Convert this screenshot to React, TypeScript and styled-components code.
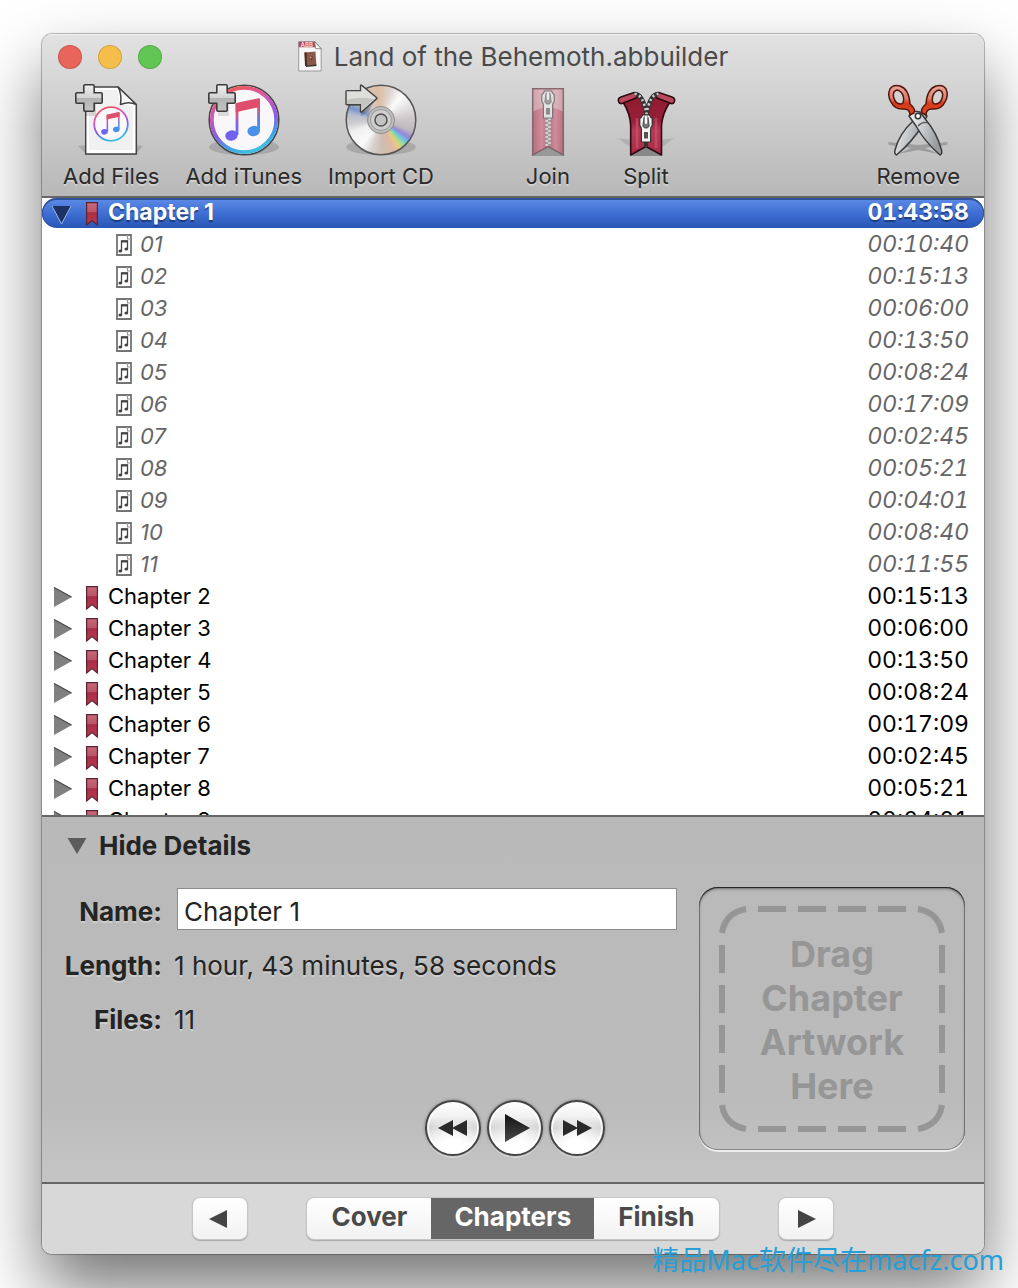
import React, { useState } from "react";
import styled, { createGlobalStyle, css } from "styled-components";

const GlobalStyle = createGlobalStyle`
  * { box-sizing: border-box; }
  html, body { margin: 0; background: #fff; }
  body { font-family: Inter, "Liberation Sans", sans-serif; color: #242424; }
  button, input { font: inherit; color: inherit; }
  button { margin: 0; padding: 0; border: 0; background: none; }
  ul { list-style: none; margin: 0; padding: 0; }
  svg { display: block; flex: none; overflow: visible; }
`;

const Page = styled.div`
  position: relative;
  height: 100vh;
  min-height: 900px;
  padding: 34px 34px 34px 42px;
  display: flex;
  overflow: hidden;
`;

const Window = styled.main`
  flex: 1;
  min-width: 0;
  display: flex;
  flex-direction: column;
  border-radius: 10px;
  overflow: hidden;
  background: #fff;
  box-shadow: 0 0 0 1px rgba(0, 0, 0, 0.2), 0 0 2px rgba(0, 0, 0, 0.25), 0 36px 68px rgba(0, 0, 0, 0.54);
`;

const Header = styled.header`
  flex: none;
  background: linear-gradient(#e2e2e2, #b8b8b8);
  border-bottom: 2px solid #666;
  box-shadow: inset 0 1px 0 #f2f2f2;
`;

const TitleBar = styled.div`
  display: grid;
  grid-template-columns: 1fr auto 1fr;
  align-items: center;
  height: 46px;
  padding: 0 16px;
`;

const Lights = styled.div`
  display: flex;
  gap: 16px;
`;

const Light = styled.button<{ $color: string }>`
  width: 24px;
  height: 24px;
  border-radius: 50%;
  background: ${(p) => p.$color};
  box-shadow: inset 0 0 0 1px rgba(0, 0, 0, 0.14);
`;

const Title = styled.h1`
  display: flex;
  align-items: center;
  gap: 12px;
  margin: 0;
  font-size: 26px;
  font-weight: 400;
  line-height: 32px;
  color: #4a4a4a;
  white-space: nowrap;
`;

const Toolbar = styled.div`
  display: flex;
  gap: 78px;
  padding: 4px 24px 6px 21px;
`;

const ToolGroup = styled.div<{ $end?: boolean }>`
  display: flex;
  gap: 26px;
  margin-left: ${(p) => (p.$end ? "auto" : "0")};
`;

const Tool = styled.button`
  display: flex;
  flex-direction: column;
  align-items: center;
  gap: 6px;
  font-size: 22px;
  line-height: 28px;
  color: #2a2a2a;
  text-shadow: 0 2px 0 rgba(255, 255, 255, 0.35);
  white-space: nowrap;
`;

const List = styled.ul`
  flex: 1;
  min-height: 0;
  overflow: hidden;
`;

const Row = styled.li<{ $kind: "selected" | "chapter" | "track" }>`
  display: flex;
  align-items: center;
  height: 30px;
  margin-bottom: 2px;
  padding: 0 15px 0 8px;
  font-size: 22px;
  line-height: 28px;
  color: #000;
  ${(p) =>
    p.$kind === "selected" &&
    css`
      border-radius: 15px;
      background: linear-gradient(#5f8ce8, #3f6fd4 50%, #2856b6);
      box-shadow: inset 0 2px 0 #30549c, inset 1px 0 0 #30549c, inset -1px 0 0 #30549c;
      color: #fff;
      font-size: 23px;
      font-weight: 700;
      text-shadow: 0 2px 1px rgba(0, 0, 0, 0.4);
    `}
  ${(p) =>
    p.$kind === "track" &&
    css`
      padding-left: 74px;
      color: #666;
      font-style: italic;
    `}
`;

const Disclosure = styled.button`
  width: 24px;
  margin-right: 12px;
  display: flex;
  justify-content: center;
`;

const RowName = styled.span<{ $track?: boolean }>`
  flex: 1;
  height: 30px;
  margin-left: ${(p) => (p.$track ? 8 : 10)}px;
`;

const Time = styled.span`
  height: 30px;
  font-size: 23px;
  font-variant-numeric: tabular-nums;
`;

const Details = styled.section`
  flex: none;
  padding: 0 19px 26px 22px;
  border-top: 2px solid #666;
  border-bottom: 2px solid #666;
  background: linear-gradient(#b9b9b9, #bbb 78%, #c5c5c5);
  font-size: 26px;
  line-height: 32px;
  text-shadow: 0 2px 0 rgba(255, 255, 255, 0.3);
`;

const Toggle = styled.button`
  display: flex;
  align-items: center;
  gap: 12px;
  margin: 13px 0 23px 3px;
  font-weight: 700;
`;

const Form = styled.div`
  display: grid;
  grid-template-columns: 98px 1fr 266px;
  grid-template-rows: 54px 54px 54px auto;
  align-items: center;
`;

const Label = styled.label`
  grid-column: 1;
  justify-self: end;
  font-weight: 700;
`;

const Value = styled.output`
  grid-column: 2;
  margin-left: 12px;
`;

const NameInput = styled.input`
  grid-column: 2;
  align-self: start;
  min-width: 0;
  height: 42px;
  margin: 3px 22px 0 15px;
  padding: 4px 6px 0;
  border: 1px solid #8c8c8c;
  border-radius: 0;
  background: #fff;
  outline: none;
`;

const Artwork = styled.div`
  grid-column: 3;
  grid-row: 1 / 5;
  align-self: start;
  height: 263px;
  margin-top: 2px;
  display: grid;
  place-items: center;
  border-radius: 19px;
  box-shadow: inset 0 1px 1px #222, inset 0 2px 3px rgba(0, 0, 0, 0.35), inset 0 0 0 1px #8a8a8a, 0 2px 0 #eee;

  & > * {
    grid-area: 1 / 1;
  }
`;

const ArtworkText = styled.p`
  width: 160px;
  margin: 2px 0 0;
  text-align: center;
  font-size: 36px;
  font-weight: 700;
  line-height: 44px;
  color: #969696;
  text-shadow: none;
`;

const Player = styled.div`
  grid-column: 1 / 4;
  grid-row: 4;
  justify-self: center;
  display: flex;
  gap: 6px;
  margin-top: 53px;
`;

const RoundButton = styled.button`
  width: 56px;
  height: 56px;
  display: grid;
  place-items: center;
  border: 2px solid #454545;
  border-radius: 50%;
  background: radial-gradient(circle at 50% 95%, #fff 20%, rgba(255, 255, 255, 0) 62%),
    linear-gradient(#fff, #f2f2f2 28%, #d2d2d2 50%, #efefef 80%, #fff);
  box-shadow: inset 0 0 0 2px rgba(255, 255, 255, 0.8), 0 0 3px rgba(0, 0, 0, 0.4), 0 2px 1px rgba(255, 255, 255, 0.6);
`;

const Footer = styled.footer`
  flex: none;
  display: flex;
  justify-content: center;
  gap: 60px;
  height: 70px;
  padding-top: 14px;
  background: #d8d8d8;
`;

const buttonFace = css`
  height: 41px;
  border-radius: 7px;
  background: linear-gradient(#fff, #f2f2f2);
  box-shadow: 0 0 0 1px #c6c6c6, 0 1px 1px 1px #aaa;
`;

const StepButton = styled.button`
  ${buttonFace}
  width: 54px;
  display: grid;
  place-items: center;
`;

const Segments = styled.div`
  ${buttonFace}
  display: flex;
  overflow: hidden;
`;

const Segment = styled.button<{ $on: boolean }>`
  padding: 0 ${(p) => (p.$on ? 23 : 24)}px 3px;
  font-size: 26px;
  font-weight: 700;
  line-height: 36px;
  color: ${(p) => (p.$on ? "#fff" : "#4a4a4a")};
  background: ${(p) => (p.$on ? "#666" : "transparent")};
`;

const Watermark = styled.p`
  position: absolute;
  right: 14px;
  bottom: 8px;
  margin: 0;
  font-family: "Noto Sans", "Noto Sans CJK SC", sans-serif;
  font-size: 27px;
  line-height: 40px;
  color: #269fd6;
  white-space: nowrap;
`;

/* ---------- icons ---------- */

const Defs = () => (
  <svg width="0" height="0" style={{ position: "absolute" }} aria-hidden="true">
    <defs>
      <linearGradient id="plusFill" x1="0" y1="0" x2="0" y2="1">
        <stop offset="0" stopColor="#eee" />
        <stop offset=".48" stopColor="#d4d4d4" />
        <stop offset=".5" stopColor="#b2b2b2" />
        <stop offset="1" stopColor="#c4c4c4" />
      </linearGradient>
      <linearGradient id="noteFill" x1="0" y1="0" x2="0" y2="1">
        <stop offset="0" stopColor="#e5486a" />
        <stop offset=".35" stopColor="#d8547f" />
        <stop offset=".6" stopColor="#8a60e8" />
        <stop offset="1" stopColor="#5b6cf2" />
      </linearGradient>
      <linearGradient id="noteRight" x1="0" y1="0" x2="0" y2="1">
        <stop offset="0" stopColor="#e5486a" />
        <stop offset=".3" stopColor="#d4557f" />
        <stop offset=".65" stopColor="#5583e8" />
        <stop offset="1" stopColor="#3f9be6" />
      </linearGradient>
      <linearGradient id="ring" x1=".25" y1="0" x2=".6" y2="1">
        <stop offset="0" stopColor="#ee5a50" />
        <stop offset=".3" stopColor="#d558b4" />
        <stop offset=".62" stopColor="#8b5be6" />
        <stop offset=".85" stopColor="#3fa5e8" />
        <stop offset="1" stopColor="#41bfe0" />
      </linearGradient>
      <linearGradient id="flag" x1="0" y1="0" x2="0" y2="1">
        <stop offset="0" stopColor="#c66c7c" />
        <stop offset=".4" stopColor="#bd5468" />
        <stop offset=".45" stopColor="#aa2e45" />
        <stop offset="1" stopColor="#bb3a50" />
      </linearGradient>
      <linearGradient id="cloth" x1="0" x2="1" y1="0" y2="0">
        <stop offset="0" stopColor="#a32a44" />
        <stop offset=".3" stopColor="#d85a74" />
        <stop offset=".5" stopColor="#9c2a42" />
        <stop offset=".75" stopColor="#d85a74" />
        <stop offset="1" stopColor="#a32a44" />
      </linearGradient>
      <linearGradient id="splitCloth" x1="0" x2="0" y1="0" y2="1">
        <stop offset="0" stopColor="#8c1a2e" />
        <stop offset=".45" stopColor="#98203a" />
        <stop offset=".6" stopColor="#b83a54" />
        <stop offset="1" stopColor="#a82c46" />
      </linearGradient>
      <linearGradient id="handle" x1="0" y1="0" x2="0" y2="1">
        <stop offset="0" stopColor="#e8a79b" />
        <stop offset=".45" stopColor="#dc7d6c" />
        <stop offset=".6" stopColor="#d5391b" />
        <stop offset="1" stopColor="#e04a26" />
      </linearGradient>
      <linearGradient id="blade" x1="0" x2="1" y1="0" y2=".4">
        <stop offset="0" stopColor="#f4f4f4" />
        <stop offset=".5" stopColor="#c9ccce" />
        <stop offset="1" stopColor="#979b9e" />
      </linearGradient>
      <linearGradient id="play" x1="0" y1="0" x2="0" y2="1">
        <stop offset="0" stopColor="#111" />
        <stop offset="1" stopColor="#4a4a4a" />
      </linearGradient>
    </defs>
  </svg>
);

const Plus = () => (
  <g>
    <path d="M10 12h11v20H10z" fill="#000" opacity=".12" />
    <path
      d="M10 .8h8q1.2 0 1.2 1.200V8.800h6.800q1.200 0 1.200 1.200v8q0 1.200-1.200 1.200h-6.800v6.800q0 1.200-1.200 1.200h-8q-1.200 0-1.200-1.200v-6.800H2q-1.200 0-1.200-1.200v-8q0-1.200 1.200-1.200h6.800V2q0-1.200 1.200-1.200z"
      fill="url(#plusFill)"
      stroke="#3c3c3c"
      strokeWidth="1.600"
    />
  </g>
);

const Note = () => (
  <g>
    <ellipse cx="23.500" cy="51.500" rx="6.300" ry="5.200" fill="#7262ee" transform="rotate(-12 23.500 51.500)" />
    <ellipse cx="45.700" cy="47" rx="6.300" ry="5.200" fill="#4a90e8" transform="rotate(-12 45.700 47)" />
    <path d="M27.600 19.500 L30.400 19 V51 H27.600z" fill="url(#noteFill)" />
    <path d="M49.200 15 H52 V47 H49.200z" fill="url(#noteRight)" />
    <path d="M27.600 20.500q0-1.500 1.500-1.800l21-4.400q1.900-.4 1.900 1.400v7.300L27.600 28.200z" fill="#de4e6d" />
  </g>
);

const AddFilesIcon = () => (
  <svg width="72" height="72" viewBox="0 0 72 72" aria-hidden="true">
    <path d="M3 62Q18 60 36 60t32 2L60 71H12z" fill="#000" opacity=".14" />
    <path d="M10.700 3H43L61.300 20.500V70H10.700z" fill="#fff" stroke="#444" strokeWidth="1.500" />
    <path d="M14 6H42l3 14 13 2V66H14z" fill="#f1f1f1" />
    <path d="M43 3q4 7 2.500 17.500Q54 17 61.300 20.500z" fill="#f6f6f6" stroke="#444" strokeWidth="1.500" strokeLinejoin="round" />
    <circle cx="36" cy="40" r="16.800" fill="#fbf8fb" stroke="url(#ring)" strokeWidth="1.800" />
    <g transform="translate(17 20.500) scale(.53)">
      <Note />
    </g>
    <Plus />
  </svg>
);

const AddITunesIcon = () => (
  <svg width="72" height="72" viewBox="0 0 72 72" aria-hidden="true">
    <ellipse cx="36" cy="63" rx="35" ry="8" fill="#000" opacity=".14" />
    <circle cx="36" cy="36" r="34.800" fill="#fff" stroke="#444" strokeWidth="1.600" />
    <circle cx="36" cy="36" r="32.200" fill="#faf7fb" stroke="url(#ring)" strokeWidth="3.800" />
    <Note />
    <Plus />
  </svg>
);

type Stop = [number, number, number, number];
const discStops: Stop[] = [
  [0, 200, 196, 198],
  [18, 188, 184, 188],
  [30, 150, 130, 215],
  [38, 110, 190, 235],
  [46, 150, 225, 150],
  [54, 235, 205, 120],
  [64, 225, 185, 165],
  [85, 205, 190, 180],
  [105, 216, 210, 206],
  [125, 250, 250, 250],
  [155, 240, 240, 240],
  [172, 205, 205, 208],
  [188, 185, 190, 205],
  [200, 120, 150, 205],
  [212, 170, 175, 190],
  [235, 215, 205, 200],
  [262, 222, 188, 160],
  [285, 222, 212, 206],
  [308, 252, 252, 252],
  [335, 225, 222, 224],
  [360, 200, 196, 198],
];

const discColor = (deg: number) => {
  const i = discStops.findIndex((s) => s[0] > deg);
  const a = discStops[i - 1];
  const b = discStops[i];
  const t = (deg - a[0]) / (b[0] - a[0]);
  const mix = (k: number) => Math.round(a[k] + (b[k] - a[k]) * t);
  return `rgb(${mix(1)},${mix(2)},${mix(3)})`;
};

const sectorPath = (deg: number, step: number) => {
  const at = (d: number) => {
    const r = (d * Math.PI) / 180;
    return `${(36 + 35 * Math.cos(r)).toFixed(2)} ${(36 + 35 * Math.sin(r)).toFixed(2)}`;
  };
  return `M36 36L${at(deg)}L${at(deg + step + 1.5)}z`;
};

const ImportCdIcon = () => (
  <svg width="72" height="72" viewBox="0 0 72 72" aria-hidden="true">
    <ellipse cx="36" cy="63" rx="35" ry="8" fill="#000" opacity=".14" />
    {Array.from({ length: 90 }, (_, i) => (
      <path key={i} d={sectorPath(i * 4, 4)} fill={discColor(i * 4)} />
    ))}
    <circle cx="36" cy="36" r="34.800" fill="none" stroke="#555" strokeWidth="1.500" />
    <circle cx="36" cy="36" r="13.500" fill="#bdbdbd" stroke="#8d8d8d" strokeWidth="1" />
    <circle cx="36" cy="36" r="10.500" fill="#cfcfcf" stroke="#9a9a9a" strokeWidth="1" />
    <circle cx="36" cy="36" r="6" fill="#c4c4c4" stroke="#555" strokeWidth="1.600" />
    <path d="M2 22h14v10l8-5 5-9z" fill="#000" opacity=".18" />
    <path
      d="M1 7.600q0-1 1-1H15.500V2q0-1.500 1.300-.6L31.500 13.400q.8.800 0 1.500L16.800 27.800q-1.300.7-1.300-.8V20.800H2q-1 0-1-1z"
      fill="#dedfda"
      stroke="#444"
      strokeWidth="1.400"
    />
    <path d="M2 16Q14 12 29 15L16.400 26.300V20H2z" fill="#c4c5c0" />
  </svg>
);

const Pull = () => (
  <g>
    <path
      d="M32.500 0h7q1.300 3 2.700 3.500v7q-1.600 1.500-1.600 4v12.500h-9.200V14.500q0-2.500-1.600-4v-7Q31.500 3 32.500 0z"
      fill="#f2f2f2"
      stroke="#333"
      strokeWidth="1.200"
    />
    <path d="M34 2h4l1.200 9-1.700 2h-3l-1.700-2z" fill="#777" stroke="#333" strokeWidth=".8" />
    <rect x="34.800" y="1" width="2.400" height="8" rx="1.200" fill="#fff" />
    <rect x="34" y="17" width="4" height="6.500" fill="#555" />
  </g>
);

const JoinIcon = () => (
  <svg width="72" height="72" viewBox="0 0 72 72" aria-hidden="true" opacity=".55">
    <path d="M20 72L36 62l16 10z" fill="#777" />
    <path d="M20.700 4.700h30.600v66.300L36 62.500 20.700 71z" fill="url(#cloth)" stroke="#4a1420" strokeWidth="1.500" />
    <path d="M21.500 5.500h29v22Q36 19 21.500 27.500z" fill="#fff" opacity=".4" />
    <path d="M36 8V62" stroke="#777" strokeWidth="5" />
    <path d="M34.800 8V62" stroke="#ddd" strokeWidth="2.600" strokeDasharray="2 2" />
    <path d="M37.400 10V62" stroke="#ddd" strokeWidth="2.600" strokeDasharray="2 2" />
    <g transform="translate(0 7)">
      <Pull />
    </g>
  </svg>
);

const SplitIcon = () => (
  <svg width="72" height="72" viewBox="0 0 72 72" aria-hidden="true">
    <path d="M8 54l28 4 28-4-10 8H18z" fill="#000" opacity=".1" />
    <path d="M20 72L36 62l16 10z" fill="#888" />
    <path
      d="M13 18L27 9.500 Q34 18 36.500 30 Q39 18 46 9.500L60 18Q52 30 51.500 42V71L36 62.500 20.700 71V42Q20.500 30 13 18z"
      fill="url(#splitCloth)"
      stroke="#2d0a12"
      strokeWidth="1.600"
      strokeLinejoin="round"
    />
    <path d="M27 34v30M46 34v30" stroke="#cc5a70" strokeWidth="2.500" opacity=".6" />
    <path d="M9 18.500q-2-4 2-5.500l13-4.500 5 2-3 3.500-14 5.500q-2 .5-3-1zM64 18.500q2-4-2-5.500L49 8.500l-5 2 3 3.500 14 5.500q2 .5 3-1z" fill="#b94a60" stroke="#2d0a12" strokeWidth="1.600" />
    <path d="M24.500 10Q33 10 36.500 30 40 10 48.500 10" fill="none" stroke="#333" strokeWidth="4.500" />
    <path d="M24.500 10Q33 10 36.500 30 40 10 48.500 10" fill="none" stroke="#ccc" strokeWidth="2.600" strokeDasharray="2.200 2.600" />
    <path d="M36 55v8" stroke="#333" strokeWidth="4" />
    <g transform="translate(0 31)">
      <Pull />
    </g>
  </svg>
);

const RemoveIcon = () => (
  <svg width="72" height="72" viewBox="0 0 72 72" aria-hidden="true">
    <path d="M6 58l30 3 30-3-1 3-22 3 14 6-21-4-20 4 13-6-22-3z" fill="#000" opacity=".2" />
    <path d="M41 27L45 32 40 42Q30 58 14.500 71q-2.500-1-1.500-5Q17 50 31 37z" fill="url(#blade)" stroke="#3c3c3c" strokeWidth="1.500" strokeLinejoin="round" />
    <path
      fillRule="evenodd"
      d="M40 29Q38 25 44 20 45 5 54 2q7-2 10 3 3 6-1 13-4 8-13 7-6 0-6 6zM57 6q-5 1-6.500 7-1 7 3 7 5 0 7-7 1-6-3.500-7z"
      fill="url(#handle)"
      stroke="#541508"
      strokeWidth="1.500"
    />
    <path d="M31 27L27 32 34 42Q43 58 58 71q2.500-1 1.500-5Q55 49 44 36L38 28z" fill="url(#blade)" stroke="#3c3c3c" strokeWidth="1.500" strokeLinejoin="round" />
    <path
      fillRule="evenodd"
      d="M32 29Q34 25 28 20 27 5 18 2 11 0 8 5 5 11 9 18q4 8 13 7 6 0 6 6zM15 6q5 1 6.500 7 1 7-3 7-5 0-7-7-1-6 3.500-7z"
      fill="url(#handle)"
      stroke="#541508"
      strokeWidth="1.500"
    />
    <path d="M36 42q5-5 10-3" fill="none" stroke="#555" strokeWidth="1.300" />
    <circle cx="36" cy="32" r="2.700" fill="#fff" stroke="#333" strokeWidth="1.500" />
  </svg>
);

const BookFileIcon = () => (
  <svg width="24" height="32" viewBox="0 0 24 32" aria-hidden="true">
    <path d="M.7.700h16.500l6 7V30H.7z" fill="#f7f7f7" stroke="#999" strokeWidth="1" />
    <path d="M.7.700h16.500l2.500 5.600H.7z" fill="#a8455a" />
    <path d="M16.500.700L23.200 7.700h-5.500z" fill="#fff" stroke="#777" strokeWidth=".8" />
    <text x="2.500" y="5.800" fontSize="6" fontWeight="700" fill="#f3d6dc">ABB</text>
    <path d="M6.500 11.500l11-1 .8 13.500-11 1z" fill="#8a5a48" />
    <path d="M6.500 11.500l2-.2.500 13.500-2 .2z" fill="#4a2a22" />
    <path d="M8 24.500l10.500-1v1.500L8 26z" fill="#3b3030" />
    <path d="M11.500 15l3.500.500-1 4-2.500-1z" fill="#6b4336" />
    <circle cx="12.500" cy="16.500" r="1" fill="#c99c7a" />
  </svg>
);

const FlagIcon = () => (
  <svg width="12" height="24" viewBox="0 0 12 24" aria-hidden="true">
    <path d="M.6 1.600h10.800V24L6 19.500.6 24z" fill="url(#flag)" stroke="#5b2431" strokeWidth="1.200" />
  </svg>
);

const TrackIcon = () => (
  <svg width="16" height="22" viewBox="0 0 16 22" fill="none" aria-hidden="true">
    <path d="M1 1h14v20H1z" stroke="#747474" strokeWidth="1.800" />
    <path d="M11.500 1v4H15" stroke="#999" strokeWidth="1.200" />
    <path d="M5.500 17V7h6v8" stroke="#444" strokeWidth="1.300" />
    <path d="M5.500 7.500h6" stroke="#444" strokeWidth="2" />
    <ellipse cx="4.300" cy="17" rx="1.900" ry="1.500" fill="#444" />
    <ellipse cx="10.300" cy="15" rx="1.900" ry="1.500" fill="#444" />
  </svg>
);

const OpenTriangle = () => (
  <svg width="20" height="19" viewBox="0 0 20 19" aria-hidden="true">
    <path d="M0 2h19L9.500 20z" fill="#1d3263" />
    <path d="M0 2L9.500 20 19 2" fill="none" stroke="#9db8ee" strokeWidth="1" />
  </svg>
);

const ClosedTriangle = () => (
  <svg width="18" height="20" viewBox="0 0 18 20" aria-hidden="true">
    <path d="M1 0L19 10 1 20z" fill="#808080" />
    <path d="M1 .5L18.500 10" stroke="#4d4d4d" strokeWidth="1.200" />
  </svg>
);

const DashedFrame = () => {
  const offsets = [39, 79, 119, 159];
  const sides = offsets
    .map((o) => `M${o} 3h28M${o} 223h28M3 ${o}v28M223 ${o}v28`)
    .join("");
  return (
    <svg width="226" height="226" viewBox="0 0 226 226" fill="none" stroke="#969696" strokeWidth="6" aria-hidden="true">
      <path d={sides} />
      <path d="M3 27Q6 7 27 3M199 3Q220 7 223 27M223 199Q220 219 199 223M27 223Q6 219 3 199" />
    </svg>
  );
};

/* ---------- data ---------- */

const tracks = [
  "00:10:40", "00:15:13", "00:06:00", "00:13:50", "00:08:24", "00:17:09",
  "00:02:45", "00:05:21", "00:04:01", "00:08:40", "00:11:55",
];
const chapters = [
  "00:15:13", "00:06:00", "00:13:50", "00:08:24", "00:17:09", "00:02:45", "00:05:21", "00:04:01",
];
const steps = ["Cover", "Chapters", "Finish"];

export default function App() {
  const [name, setName] = useState("Chapter 1");
  const [step, setStep] = useState("Chapters");

  return (
    <Page>
      <GlobalStyle />
      <Defs />
      <Window>
        <Header>
          <TitleBar>
            <Lights>
              <Light $color="#e9655b" aria-label="Close" />
              <Light $color="#f5be4b" aria-label="Minimize" />
              <Light $color="#61c654" aria-label="Zoom" />
            </Lights>
            <Title>
              <BookFileIcon />
              Land of the Behemoth.abbuilder
            </Title>
          </TitleBar>
          <Toolbar>
            <ToolGroup>
              <Tool><AddFilesIcon />Add Files</Tool>
              <Tool><AddITunesIcon />Add iTunes</Tool>
              <Tool><ImportCdIcon />Import CD</Tool>
            </ToolGroup>
            <ToolGroup>
              <Tool><JoinIcon />Join</Tool>
              <Tool><SplitIcon />Split</Tool>
            </ToolGroup>
            <ToolGroup $end>
              <Tool><RemoveIcon />Remove</Tool>
            </ToolGroup>
          </Toolbar>
        </Header>

        <List>
          <Row $kind="selected">
            <Disclosure aria-label="Collapse Chapter 1"><OpenTriangle /></Disclosure>
            <FlagIcon />
            <RowName>Chapter 1</RowName>
            <Time>01:43:58</Time>
          </Row>
          {tracks.map((time, i) => (
            <Row key={i} $kind="track">
              <TrackIcon />
              <RowName $track>{String(i + 1).padStart(2, "0")}</RowName>
              <Time>{time}</Time>
            </Row>
          ))}
          {chapters.map((time, i) => (
            <Row key={i} $kind="chapter">
              <Disclosure aria-label={`Expand Chapter ${i + 2}`}><ClosedTriangle /></Disclosure>
              <FlagIcon />
              <RowName>Chapter {i + 2}</RowName>
              <Time>{time}</Time>
            </Row>
          ))}
        </List>

        <Details>
          <Toggle>
            <svg width="20" height="16" viewBox="0 0 20 16" aria-hidden="true">
              <path d="M.500 0h19L10 16z" fill="#5c5c5c" />
            </svg>
            Hide Details
          </Toggle>
          <Form>
            <Label htmlFor="name">Name:</Label>
            <NameInput id="name" value={name} onChange={(e) => setName(e.target.value)} />
            <Label htmlFor="length">Length:</Label>
            <Value id="length">1 hour, 43 minutes, 58 seconds</Value>
            <Label htmlFor="files">Files:</Label>
            <Value id="files">11</Value>
            <Artwork>
              <DashedFrame />
              <ArtworkText>Drag Chapter Artwork Here</ArtworkText>
            </Artwork>
            <Player>
              <RoundButton aria-label="Rewind">
                <svg width="30" height="16" viewBox="0 0 30 16" fill="#2a2a2a" aria-hidden="true">
                  <path d="M0 8L15 0v16zM14 8L29 0v16z" />
                </svg>
              </RoundButton>
              <RoundButton aria-label="Play">
                <svg width="20" height="28" viewBox="0 0 20 28" aria-hidden="true">
                  <path d="M0 0L25 14 0 28z" fill="url(#play)" />
                </svg>
              </RoundButton>
              <RoundButton aria-label="Fast forward">
                <svg width="30" height="16" viewBox="0 0 30 16" fill="#2a2a2a" aria-hidden="true">
                  <path d="M1 0L16 8 1 16zM15 0L30 8 15 16z" />
                </svg>
              </RoundButton>
            </Player>
          </Form>
        </Details>

        <Footer>
          <StepButton aria-label="Previous">
            <svg width="22" height="18" viewBox="0 0 22 18" aria-hidden="true">
              <path d="M0 9L18 0v18z" fill="#444" />
            </svg>
          </StepButton>
          <Segments>
            {steps.map((s) => (
              <Segment key={s} $on={s === step} aria-pressed={s === step} onClick={() => setStep(s)}>
                {s}
              </Segment>
            ))}
          </Segments>
          <StepButton aria-label="Next">
            <svg width="16" height="18" viewBox="0 0 16 18" aria-hidden="true">
              <path d="M0 0L18 9 0 18z" fill="#444" />
            </svg>
          </StepButton>
        </Footer>
      </Window>
      <Watermark>精品Mac软件尽在macfz.com</Watermark>
    </Page>
  );
}
